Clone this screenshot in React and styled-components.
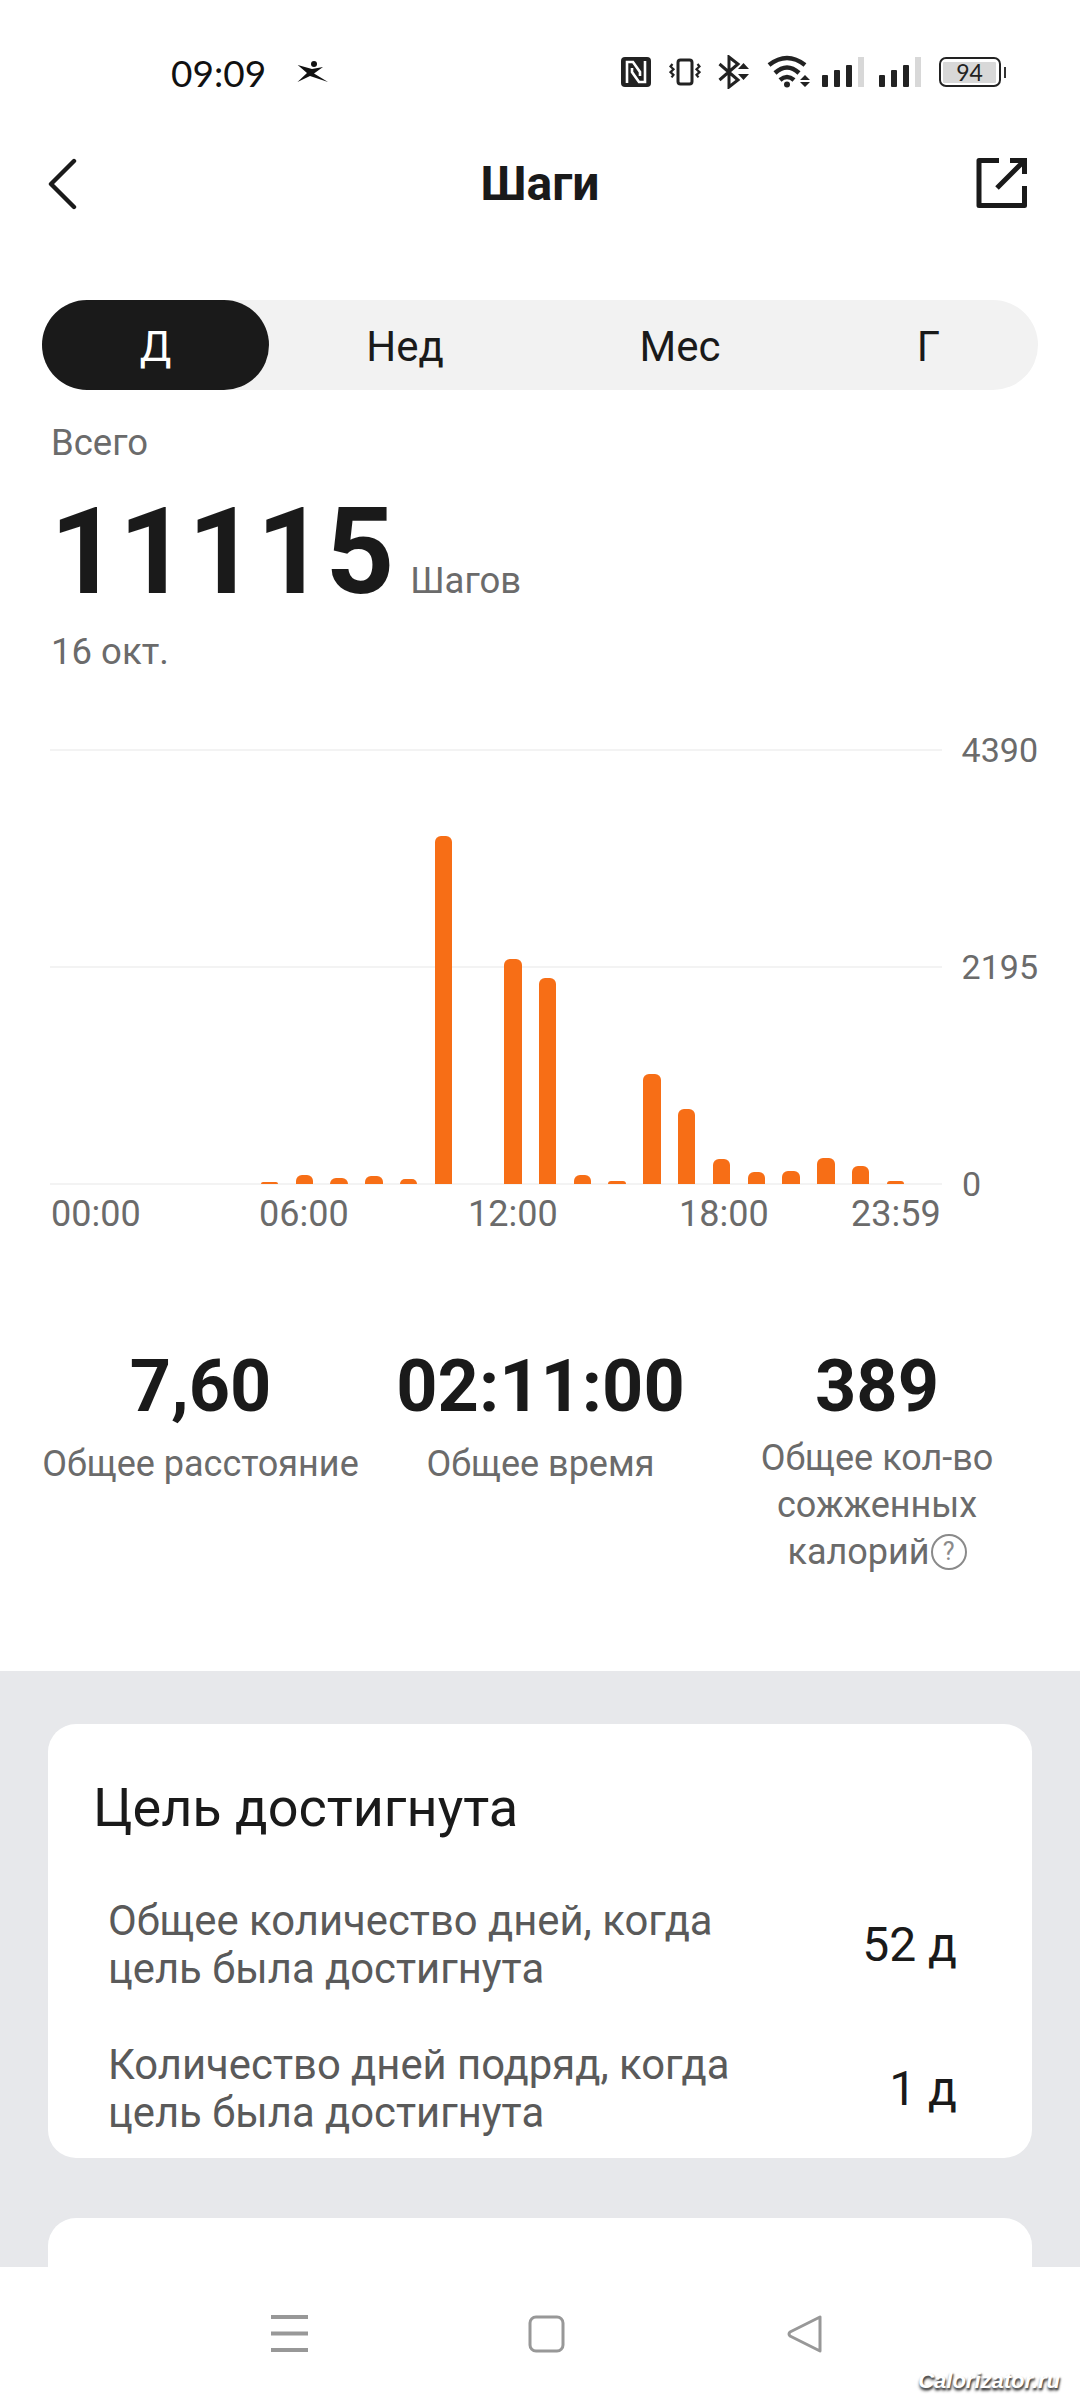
import React from "react";
import styled, { createGlobalStyle } from "styled-components";

const Global = createGlobalStyle`
  html, body { margin: 0; padding: 0; background: #fff; }
  * { box-sizing: border-box; }
  body { font-family: Roboto, "Noto Sans", sans-serif; color: #1a1a1a; }
`;

const Page = styled.div`
  width: 1080px; height: 2400px; display: flex; flex-direction: column; overflow: hidden; background: #fff;
`;
const Scroll = styled.div`
  flex: 1; min-height: 0; overflow: hidden; display: flex; flex-direction: column;
`;
const StatusBar = styled.div`
  height: 144px; flex: none; display: flex; align-items: center; padding-left: 171px;
`;
const Time = styled.span`
  font-family: Lato, sans-serif; font-size: 37px; color: #111; line-height: 1; width: 125px;
`;
const StatusIcons = styled.div`
  margin-left: auto; margin-right: 74px; display: flex; align-items: center; height: 36px;
`;
const Header = styled.header`
  height: 80px; flex: none; display: grid; grid-template-columns: 1fr auto 1fr; align-items: center; padding: 0 52px 0 46px;
`;
const HeaderEnd = styled.div`
  justify-self: end;
`;
const Title = styled.h1`
  margin: 0 0 0 6px; font-size: 48px; font-weight: 700; line-height: 1; color: #1a1a1a;
`;
const Segments = styled.div`
  margin: 76px 42px 0; height: 90px; flex: none; border-radius: 45px; background: #f2f2f2;
  display: grid; grid-template-columns: 227px 272px 278px 219px;
`;
const Segment = styled.div`
  display: flex; align-items: center; justify-content: center; font-size: 42px; border-radius: 45px; padding-top: 2px;
  background: ${p => (p.$active ? "#1a1a1a" : "transparent")};
  color: ${p => (p.$active ? "#fff" : "#1a1a1a")};
`;
const Summary = styled.section`
  padding: 32px 52px 0 51px; flex: none;
`;
const Muted = styled.div`
  font-size: 36.5px; line-height: 42px; color: #6b6b6b;
`;
const TotalRow = styled.div`
  display: flex; align-items: baseline; gap: 16px; margin-top: 28px; height: 120px;
`;
const Total = styled.span`
  font-size: 120px; font-weight: 700; line-height: 120px; color: #1a1a1a; margin-left: -1px;
`;
const Unit = styled.span`
  font-size: 36.5px; color: #6b6b6b;
`;
const DateLine = styled(Muted)`
  margin-top: 19px;
`;
const Chart = styled.section`
  position: relative; margin: 76px 0 0 50px; width: 988px; height: 436px; flex: none;
  display: flex; flex-direction: column; justify-content: space-between;
`;
const GridRow = styled.div`
  height: 2px; display: flex; align-items: center; gap: 20px;
`;
const GridLine = styled.div`
  width: 892px; height: 2px; background: #f3f3f3;
`;
const AxisLabel = styled.span`
  font-size: 34px; line-height: 2px; color: #6b6b6b;
`;
const Bars = styled.div`
  position: absolute; left: 0; bottom: 1px; padding-left: 2.2px; display: flex; align-items: flex-end; gap: 17.27px;
`;
const Bar = styled.div`
  width: 17.5px; background: #f76e16; border-radius: 6px 6px 0 0;
`;
const XAxis = styled.div`
  margin: 8px 0 0 51px; width: 889px; height: 42px; flex: none; display: grid; grid-template-columns: 208px 209px 211px 172px auto;
  font-size: 36px; line-height: 42px; color: #6b6b6b;
`;
const Stats = styled.section`
  flex: none; height: 436px; padding-top: 110px; display: grid; grid-template-columns: 401px 279px 394px;
`;
const Stat = styled.div`
  display: flex; flex-direction: column; align-items: center; text-align: center;
`;
const StatValue = styled.div`
  font-size: 72px; font-weight: 700; line-height: 84px; color: #1a1a1a; white-space: nowrap;
`;
const StatLabel = styled.div`
  font-size: 36px; line-height: 47px; color: #6b6b6b; margin-top: 12px; white-space: nowrap;
`;
const StatLabelTight = styled(StatLabel)`
  margin-top: 6px; margin-left: 0;
`;
const Help = styled.span`
  display: inline-flex; align-items: center; justify-content: center; width: 36px; height: 36px; border-radius: 50%;
  border: 2.5px solid #8a8a8a; color: #8a8a8a; font-size: 25px; line-height: 1; vertical-align: 4px; margin-left: 1px;
`;
const Gray = styled.section`
  flex: 1; min-height: 0; background: #e7e8eb; padding: 53px 48px 0; display: flex; flex-direction: column; gap: 60px; overflow: hidden;
`;
const Card = styled.div`
  background: #fff; border-radius: 28px; flex: none; height: ${p => p.$h}px; padding: 54px 46px 0;
`;
const CardTitle = styled.h2`
  margin: 0 0 0 -1px; font-size: 54px; font-weight: 400; line-height: 60px; color: #1a1a1a;
`;
const Goal = styled.div`
  display: flex; align-items: center; justify-content: space-between; padding: 0 29px 0 14px; margin-top: ${p => p.$mt}px;
`;
const GoalText = styled.div`
  font-size: 41.8px; line-height: 48px; color: #5a5a5a; white-space: pre-line;
`;
const GoalValue = styled.div`
  font-size: 48px; line-height: 60px; color: #1a1a1a;
`;
const Nav = styled.nav`
  height: 133px; flex: none; background: #fff; position: relative; display: grid; grid-template-columns: 308px 257px 258px;
  justify-content: start; align-items: center;
`;
const NavSlot = styled.div`
  display: flex; justify-content: flex-end; align-items: center; height: 100%;
`;
const Watermark = styled.span`
  position: absolute; right: 20px; bottom: 6px; font-size: 22px; font-weight: 700; font-style: italic; color: #fff;
  font-family: "Liberation Sans", sans-serif; text-shadow: 1px 2px 2px #444, 0 3px 3px #888;
`;

const Ic = styled.svg`
  display: block; flex: none; margin-left: ${p => p.$ml || 0}px;
`;

const data = [0,0,0,0,0,0,2.5,9,6,8,5,348,0,225,206,9,3.5,110,75,25,12,13,26,18,3];

const Runner = () => (
  <Ic width="32" height="22" viewBox="0 0 32 22">
    <circle cx="18" cy="3" r="3" fill="#111" />
    <path d="M1.7 4 L16 8 L27 6 L18 12.5 L32 21 L14 15 L1.5 21 L11 12 Z" fill="#111" />
  </Ic>
);

const Nfc = () => (
  <Ic width="30" height="30" viewBox="0 0 30 30">
    <rect width="30" height="30" rx="4" fill="#222" />
    <path d="M6 26 V5 H12 L19 15 V19 M24 4 V25 H18 L11 15 V11" fill="none" stroke="#fff" strokeWidth="2.6" />
  </Ic>
);
const Vibrate = () => (
  <Ic width="32" height="28" viewBox="0 0 32 28" $ml={18}>
    <rect x="9" y="2" width="14" height="24" rx="2.5" fill="none" stroke="#222" strokeWidth="3" />
    <path d="M3.5 6 l-2 2.5 3 2.8 -3 2.8 3 2.8 -2 2.5 M28.5 6 l2 2.5 -3 2.8 3 2.8 -3 2.8 2 2.5" fill="none" stroke="#222" strokeWidth="2.2" />
  </Ic>
);
const Bluetooth = () => (
  <Ic width="32" height="34" viewBox="0 0 32 34" $ml={17}>
    <path d="M1.5 9 L20 25 L11 32 V2 L20 9 L1.5 25" fill="none" stroke="#222" strokeWidth="3" />
    <path d="M25.5 8 l-5.5 6 h11 Z M20 19 h11 l-5.5 6 Z" fill="#222" />
  </Ic>
);
const Wifi = () => (
  <Ic width="44" height="34" viewBox="0 0 44 34" $ml={17}>
    <path d="M2 10 Q20 -4 38 10 M8 18 Q20 7 32 18 M13 25 Q20 19 27 25" fill="none" stroke="#222" strokeWidth="4.5" />
    <circle cx="20" cy="29.5" r="3" fill="#222" />
    <path d="M38 20 l-5 5 h10 Z M33 27 h10 l-5 5 Z" fill="#222" />
  </Ic>
);
const Signal = ({ ml }) => (
  <Ic width="42" height="30" viewBox="0 0 42 30" $ml={ml}>
    <rect x="0" y="18" width="6" height="12" rx="1" fill="#222" />
    <rect x="12" y="13" width="6" height="17" rx="1" fill="#222" />
    <rect x="24" y="8" width="6" height="22" rx="1" fill="#222" />
    <rect x="36" y="0" width="6" height="30" fill="#d8d8d8" />
  </Ic>
);
const BatteryBox = styled.div`
  margin-left: 18px; width: 62px; height: 30px; border: 2.5px solid #222; border-radius: 7px; padding: 2.5px; flex: none;
`;
const BatteryFill = styled.div`
  width: 100%; height: 100%; background: #d8d8d8; border-radius: 1px; display: flex; align-items: center; justify-content: center;
  font-family: Lato, sans-serif; font-size: 23px; color: #222; line-height: 1;
`;
const BatteryTip = styled.div`
  margin-left: 3px; width: 2.5px; height: 11px; background: #333; flex: none;
`;

const Back = () => (
  <Ic width="32" height="52" viewBox="0 0 32 52">
    <path d="M28 3 L5 26 L28 49" fill="none" stroke="#1a1a1a" strokeWidth="4.4" strokeLinecap="round" strokeLinejoin="round" />
  </Ic>
);
const Share = () => (
  <Ic width="52" height="52" viewBox="0 0 52 52">
    <path d="M23 2.5 H3 V47.5 H48.5 V28" fill="none" stroke="#1a1a1a" strokeWidth="5" strokeLinejoin="round" />
    <path d="M34 2.5 H48.5 V16 M21 30 L47 4" fill="none" stroke="#1a1a1a" strokeWidth="5" />
  </Ic>
);

const NavMenu = () => (
  <Ic width="37" height="37" viewBox="0 0 37 37">
    <path d="M0 2 H37 M0 18.5 H37 M0 35 H37" stroke="#989898" strokeWidth="4" />
  </Ic>
);
const NavHome = () => (
  <Ic width="37" height="38" viewBox="0 0 37 38">
    <rect x="2" y="2" width="33" height="34" rx="6" fill="none" stroke="#989898" strokeWidth="3" />
  </Ic>
);
const NavBack = () => (
  <Ic width="36" height="38" viewBox="0 0 36 38">
    <path d="M33 2 V36 L3 21 Q1 19 3 17 Z" fill="none" stroke="#989898" strokeWidth="3" strokeLinejoin="round" />
  </Ic>
);

export default function App() {
  return (
    <Page>
      <Global />
      <Scroll>
        <StatusBar>
          <Time>09:09</Time>
          <Runner />
          <StatusIcons>
            <Nfc /><Vibrate /><Bluetooth /><Wifi /><Signal ml={11} /><Signal ml={15} />
            <BatteryBox><BatteryFill>94</BatteryFill></BatteryBox><BatteryTip />
          </StatusIcons>
        </StatusBar>
        <Header><Back /><Title>Шаги</Title><HeaderEnd><Share /></HeaderEnd></Header>
        <Segments>
          <Segment $active>Д</Segment><Segment>Нед</Segment><Segment>Мес</Segment><Segment>Г</Segment>
        </Segments>
        <Summary>
          <Muted>Всего</Muted>
          <TotalRow><Total>11115</Total><Unit>Шагов</Unit></TotalRow>
          <DateLine>16 окт.</DateLine>
        </Summary>
        <Chart>
          <GridRow><GridLine /><AxisLabel>4390</AxisLabel></GridRow>
          <GridRow><GridLine /><AxisLabel>2195</AxisLabel></GridRow>
          <GridRow><GridLine /><AxisLabel>0</AxisLabel></GridRow>
          <Bars>
            {data.map((h, i) => <Bar key={i} style={{ height: h }} />)}
          </Bars>
        </Chart>
        <XAxis><span>00:00</span><span>06:00</span><span>12:00</span><span>18:00</span><span>23:59</span></XAxis>
        <Stats>
          <Stat><StatValue>7,60</StatValue><StatLabel>Общее расстояние</StatLabel></Stat>
          <Stat><StatValue>02:11:00</StatValue><StatLabel>Общее время</StatLabel></Stat>
          <Stat><StatValue>389</StatValue><StatLabelTight>Общее кол-во<br />сожженных<br />калорий<Help>?</Help></StatLabelTight></Stat>
        </Stats>
        <Gray>
          <Card $h={434}>
            <CardTitle>Цель достигнута</CardTitle>
            <Goal $mt={59}><GoalText>{"Общее количество дней, когда\nцель была достигнута"}</GoalText><GoalValue>52 д</GoalValue></Goal>
            <Goal $mt={48}><GoalText>{"Количество дней подряд, когда\nцель была достигнута"}</GoalText><GoalValue>1 д</GoalValue></Goal>
          </Card>
          <Card $h={300} />
        </Gray>
      </Scroll>
      <Nav>
        <NavSlot><NavMenu /></NavSlot>
        <NavSlot><NavHome /></NavSlot>
        <NavSlot><NavBack /></NavSlot>
        <Watermark>Calorizator.ru</Watermark>
      </Nav>
    </Page>
  );
}
